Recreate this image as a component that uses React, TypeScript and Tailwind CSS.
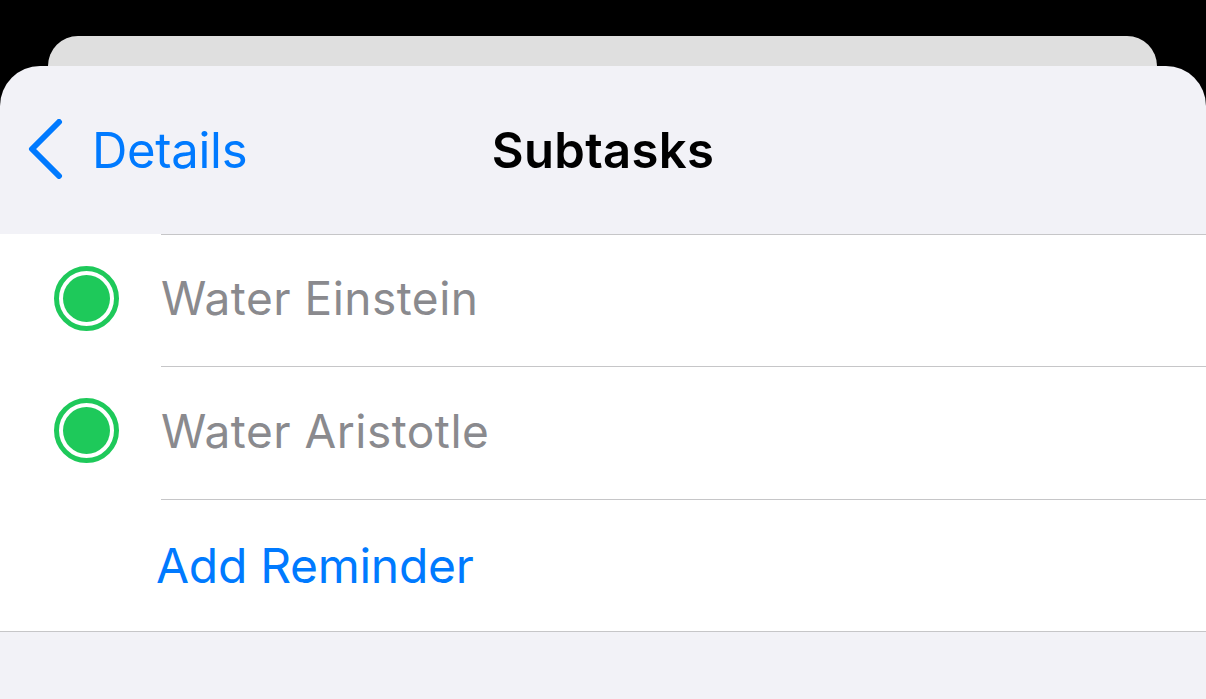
import React from 'react';

const subtasks = [
  { title: 'Water Einstein', h: 'h-[132px]' },
  { title: 'Water Aristotle', h: 'h-[133px]' },
];

const Check: React.FC = () => (
  <div className="flex h-[65px] w-[65px] items-center justify-center rounded-full border-[5px] border-[#1ec95a] bg-white">
    <div className="h-[47px] w-[47px] rounded-full bg-[#1ec95a]" />
  </div>
);

const App: React.FC = () => {
  return (
    <div className="flex h-[699px] w-full flex-col overflow-hidden bg-black pt-[36px] font-['Inter',sans-serif]">
      {/* sheet behind */}
      <div className="mx-[48px] mr-[49px] h-[30px] shrink-0 rounded-t-[40px] bg-[#dfdfdf]" />

      {/* front sheet */}
      <div className="flex flex-1 flex-col overflow-hidden rounded-t-[40px] bg-[#f2f2f7]">
        <div className="relative flex h-[168px] shrink-0 items-center">
          <div className="flex items-center pl-[27px] text-[#007aff]">
            <svg width="36" height="60" viewBox="0 0 36 60" className="-mt-[2px]">
              <polyline
                points="32,3 5,30 32,57"
                fill="none"
                stroke="#007aff"
                strokeWidth="6"
                strokeLinecap="round"
                strokeLinejoin="round"
              />
            </svg>
            <span className="ml-[29px] text-[49px] leading-none tracking-[-0.3px]">Details</span>
          </div>
          <h1 className="absolute left-1/2 -translate-x-1/2 text-[49px] font-semibold leading-none tracking-[0.3px] text-black">
            Subtasks
          </h1>
        </div>

        <div className="bg-white">
          {subtasks.map((t) => (
            <div key={t.title} className={`flex items-center ${t.h}`}>
              <div className="flex w-[161px] shrink-0 items-center pb-[4px] pl-[54px]">
                <Check />
              </div>
              <div className="flex h-full flex-1 items-center border-t border-[#c6c6c8] pb-[5px]">
                <span className="text-[46px] leading-none tracking-[0.5px] text-[#8a8a8e]">{t.title}</span>
              </div>
            </div>
          ))}
          <div className="flex h-[132px] items-center">
            <div className="w-[161px] shrink-0" />
            <div className="flex h-full flex-1 items-center border-t border-[#c6c6c8]">
              <span className="-ml-[5px] text-[48px] leading-none tracking-[-0.3px] text-[#007aff]">Add Reminder</span>
            </div>
          </div>
        </div>
        <div className="h-px bg-[#c6c6c8]" />
      </div>
    </div>
  );
};

export default App;
